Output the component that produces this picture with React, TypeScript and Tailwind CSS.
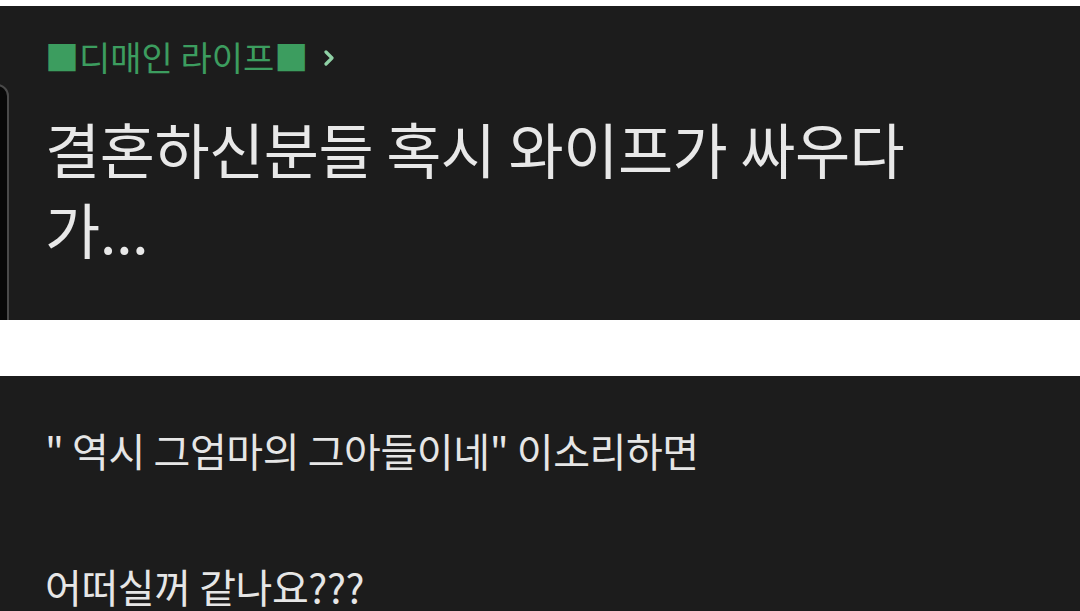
export default function App() {
  return (
    <div
      className="w-[1080px] h-[611px] overflow-hidden bg-white"
      style={{ fontFamily: '"Noto Sans CJK KR", "Noto Sans", sans-serif' }}
    >
      {/* post header card */}
      <div className="relative mt-[6px] h-[314px] overflow-hidden bg-[#1c1c1c] px-[45px] pt-[31px]">
        {/* edge of the neighbouring card peeking in from the left */}
        <div className="absolute left-[-24px] top-[78px] h-[300px] w-[33px] rounded-tr-[12px] border-2 border-[#4a4a4a] bg-[#080808]" />

        <div className="flex items-center text-[34px] leading-[40px] text-[#3c9d5f]">
          <span>■디매인 라이프■</span>
          <svg viewBox="0 0 12 16" className="ml-[15px] mt-[2px] h-[16px] w-[12px]" aria-hidden="true">
            <path
              d="M3 2l6 6-6 6"
              stroke="#8fd1a5"
              strokeWidth="3.2"
              fill="none"
              strokeLinecap="round"
              strokeLinejoin="round"
            />
          </svg>
        </div>

        <h1 className="mt-[31px] text-[60px] leading-[80px] text-[#e8e8e8] tracking-[-0.5px]">
          결혼하신분들 혹시 와이프가 싸우다
          <br />
          가...
        </h1>
      </div>

      {/* post body */}
      <div className="mt-[56px] h-[235px] overflow-hidden bg-[#1c1c1c] px-[45px] pt-[40px] text-[40px] leading-[68px] text-[#e6e6e6] tracking-[-0.4px]">
        <p>" 역시 그엄마의 그아들이네" 이소리하면</p>
        <p className="mt-[77px] leading-[50px]">어떠실꺼 같나요???</p>
      </div>
    </div>
  );
}
